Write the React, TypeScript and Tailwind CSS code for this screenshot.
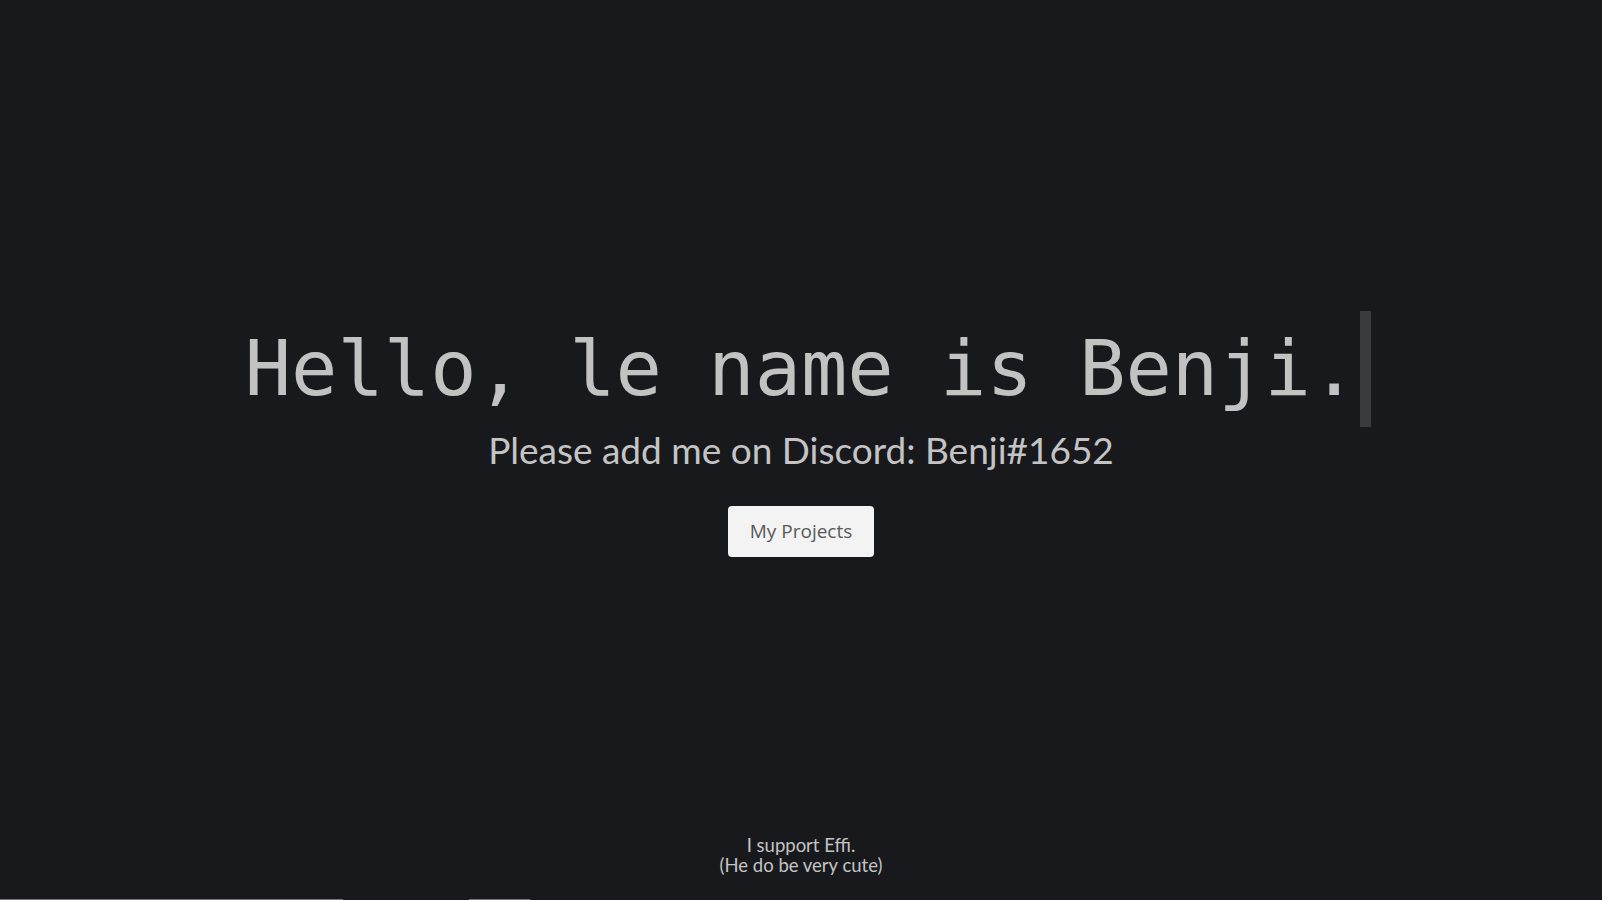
export default function App() {
  return (
    <div className="h-screen w-full overflow-hidden bg-[#18191d] flex flex-col items-center">
      <div className="pt-[311px] flex flex-col items-center">
        <h1
          className="ml-[10px] inline-block border-r-[11px] border-[#3a3b3f] pl-[4px] pr-[3px] text-[77px] leading-[116px] font-normal text-[#c2c2c2] whitespace-pre"
          style={{ fontFamily: '"DejaVu Sans Mono", "Liberation Mono", monospace' }}
        >
          Hello, le name is Benji.
        </h1>
        <p
          className="mt-[1px] text-[37px] leading-[44px] text-[#c4c4c4]"
          style={{ fontFamily: 'Lato, "Noto Sans", sans-serif' }}
        >
          Please add me on Discord: Benji#1652
        </p>
        <button
          className="mt-[34px] w-[146px] h-[51px] rounded-[4px] bg-[#f3f3f3] text-[19px] text-[#595959]"
          style={{ fontFamily: '"Open Sans", "Noto Sans", sans-serif' }}
        >
          My Projects
        </button>
      </div>
      <div
        className="mt-auto mb-[24px] flex flex-col items-center text-[18.5px] leading-[20px] text-[#c4c4c4]"
        style={{ fontFamily: 'Lato, "Noto Sans", sans-serif' }}
      >
        <span>I support Effi.</span>
        <span>(He do be very cute)</span>
      </div>
      <div className="w-full flex h-px">
        <div className="w-[343px] bg-[#777777]" />
        <div className="ml-[126px] w-[61px] bg-[#777777]" />
      </div>
    </div>
  );
}
